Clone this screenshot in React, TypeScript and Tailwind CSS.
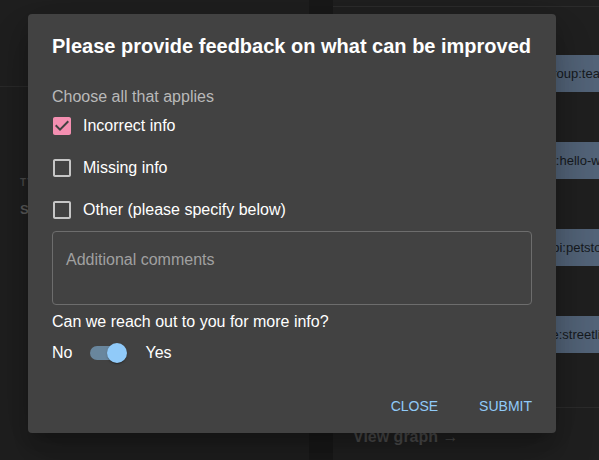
import React from "react";

const CheckedIcon = () => (
  <svg width="24" height="24" viewBox="0 0 24 24" className="shrink-0">
    <path
      fill="#f48fb1"
      d="M19 3H5c-1.11 0-2 .9-2 2v14c0 1.1.89 2 2 2h14c1.11 0 2-.9 2-2V5c0-1.1-.89-2-2-2zm-9 14l-5-5 1.41-1.41L10 14.17l7.59-7.59L19 8l-9 9z"
    />
  </svg>
);

const UncheckedIcon = () => (
  <svg width="24" height="24" viewBox="0 0 24 24" className="shrink-0">
    <path
      fill="rgba(255,255,255,0.7)"
      d="M19 5v14H5V5h14m0-2H5c-1.1 0-2 .9-2 2v14c0 1.1.9 2 2 2h14c1.1 0 2-.9 2-2V5c0-1.1-.9-2-2-2z"
    />
  </svg>
);

const chips = ["group:team-a", "nt:hello-world", "api:petstore", "ce:streetlights"];

export default function App() {
  return (
    <div
      className="relative w-[599px] h-[460px] overflow-hidden bg-[#1f1f1f]"
      style={{ fontFamily: '"Liberation Sans", Arial, sans-serif' }}
    >
      {/* background page */}
      <div className="flex h-full">
        <div className="w-[309px] shrink-0 bg-[#1f1f1f] flex flex-col">
          <div className="h-[87px] border-b border-[#2a2a2a] shrink-0" />
          <div className="pl-[20px] pt-[90px] flex flex-col">
            <div className="text-[10px] leading-[12px] font-bold tracking-[1px] text-[#4a4a4a]">TYPE</div>
            <div className="mt-[13px] text-[13px] leading-[16px] font-bold text-[#5a5a5a]">Service</div>
          </div>
        </div>
        <div className="w-[24px] shrink-0 bg-[#191919]" />
        <div className="flex-1 min-w-0 overflow-hidden bg-[#202020] flex flex-col">
          <div className="h-[7px] border-b border-[#2c2c2c] shrink-0" />
          <div className="flex-1 pt-[48px] flex flex-col gap-[50px]">
            {chips.map((c) => (
              <div key={c} className="pl-[204px] flex">
                <div className="h-[37px] bg-[#536479] pl-[8px] pr-[8px] flex items-center text-[13px] text-[#161a20] whitespace-nowrap">
                  {c}
                </div>
              </div>
            ))}
          </div>
          <div className="h-[53px] border-t border-[#2c2c2c] pl-[20px] pt-[17px] shrink-0">
            <span className="text-[16px] leading-[24px] font-bold text-[#4c4c4c] whitespace-nowrap">View graph →</span>
          </div>
        </div>
      </div>

      {/* dialog */}
      <div className="absolute left-[28px] top-[14px] w-[528px] h-[419px] bg-[#424242] rounded-[4px] shadow-[0_11px_15px_-7px_rgba(0,0,0,0.2),0_24px_38px_3px_rgba(0,0,0,0.14),0_9px_46px_8px_rgba(0,0,0,0.12)] px-[24px] pt-[20px] flex flex-col">
        <div className="text-[20px] leading-[24px] font-bold text-white whitespace-nowrap">
          Please provide feedback on what can be improved
        </div>
        <div className="mt-[30px] text-[16px] leading-[17px] text-[#b9b9b9]">Choose all that applies</div>
        <div className="flex flex-col">
          <div className="h-[42px] flex items-center">
            <div className="-ml-[2px]"><CheckedIcon /></div>
            <span className="ml-[9px] text-[16px] text-white">Incorrect info</span>
          </div>
          <div className="h-[42px] flex items-center">
            <div className="-ml-[2px]"><UncheckedIcon /></div>
            <span className="ml-[9px] text-[16px] text-white">Missing info</span>
          </div>
          <div className="h-[42px] flex items-center">
            <div className="-ml-[2px]"><UncheckedIcon /></div>
            <span className="ml-[9px] text-[16px] text-white">Other (please specify below)</span>
          </div>
        </div>
        <textarea
          className="block w-[480px] h-[74px] resize-none rounded-[4px] border border-[#6d6d6d] bg-transparent pl-[13px] pt-[16px] text-[16px] leading-[24px] text-white outline-none placeholder:text-[#a0a0a0]"
          placeholder="Additional comments"
          style={{ fontFamily: '"Liberation Sans", Arial, sans-serif' }}
        />
        <div className="mt-[5px] text-[16px] leading-[24px] text-white">Can we reach out to you for more info?</div>
        <div className="h-[38px] flex items-center">
          <span className="text-[16px] text-white">No</span>
          <div className="ml-[6px] relative w-[58px] h-[38px] shrink-0">
            <div className="absolute left-[12px] top-[12px] w-[34px] h-[14px] rounded-[7px] bg-[#69869d]" />
            <div className="absolute left-[29px] top-[9px] w-[20px] h-[20px] rounded-full bg-[#90caf9] shadow-[0_2px_1px_-1px_rgba(0,0,0,0.2),0_1px_1px_0_rgba(0,0,0,0.14),0_1px_3px_0_rgba(0,0,0,0.12)]" />
          </div>
          <span className="ml-[9px] text-[16px] text-white">Yes</span>
        </div>
        <div className="mt-[22px] flex justify-end gap-[41px] text-[14px] leading-[24px] font-medium text-[#90caf9]">
          <span>CLOSE</span>
          <span>SUBMIT</span>
        </div>
      </div>
    </div>
  );
}
